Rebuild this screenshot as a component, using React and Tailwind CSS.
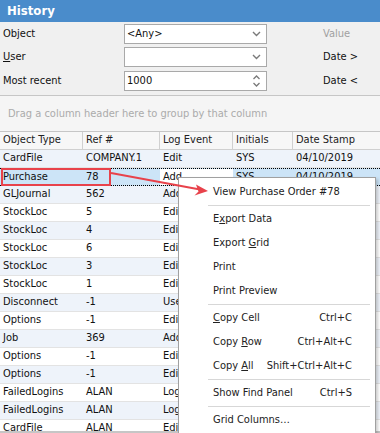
import React from "react";

const F = { fontFamily: "'DejaVu Sans Condensed', 'DejaVu Sans', sans-serif" };

const rows = [
  ["CardFile", "COMPANY.1", "Edit", "SYS", "04/10/2019"],
  ["Purchase", "78", "Add", "SYS", "04/10/2019"],
  ["GLJournal", "562", "Add", "SYS", "04/10/2019"],
  ["StockLoc", "5", "Edit", "SYS", "04/10/2019"],
  ["StockLoc", "4", "Edit", "SYS", "04/10/2019"],
  ["StockLoc", "6", "Edit", "SYS", "04/10/2019"],
  ["StockLoc", "3", "Edit", "SYS", "04/10/2019"],
  ["StockLoc", "1", "Edit", "SYS", "04/10/2019"],
  ["Disconnect", "-1", "User", "SYS", "04/10/2019"],
  ["Options", "-1", "Edit", "SYS", "04/10/2019"],
  ["Job", "369", "Add", "SYS", "04/10/2019"],
  ["Options", "-1", "Edit", "SYS", "04/10/2019"],
  ["Options", "-1", "Edit", "SYS", "04/10/2019"],
  ["FailedLogins", "ALAN", "Login", "SYS", "04/10/2019"],
  ["FailedLogins", "ALAN", "Login", "SYS", "04/10/2019"],
  ["CardFile", "ALAN", "Edit", "SYS", "04/10/2019"],
];

function Chevron() {
  return (
    <svg width="9" height="6" viewBox="0 0 9 6" className="mr-[5px]">
      <path d="M1 1 L4.5 4.5 L8 1" stroke="#7a7a7a" strokeWidth="1.4" fill="none" />
    </svg>
  );
}

function Spin() {
  return (
    <svg width="9" height="14" viewBox="0 0 9 14" className="mr-[5px]">
      <path d="M1.5 5 L4.5 2 L7.5 5" stroke="#7a7a7a" strokeWidth="1.3" fill="none" />
      <path d="M1.5 9 L4.5 12 L7.5 9" stroke="#7a7a7a" strokeWidth="1.3" fill="none" />
    </svg>
  );
}

function Input({ value, icon }) {
  return (
    <div className="ml-[124px] w-[143px] h-[20px] bg-white border border-[#a9a9a9] flex items-center justify-between pl-[2px]">
      <span className="text-[11px] text-[#111]">{value}</span>
      {icon}
    </div>
  );
}

function MenuItem({ children, shortcut }) {
  return (
    <div className="h-[24px] flex items-center justify-between pl-[34px] pr-[23px] text-[11px] text-[#222]">
      <span>{children}</span>
      {shortcut && <span>{shortcut}</span>}
    </div>
  );
}

function Sep() {
  return (
    <div className="h-[3px] flex items-center pl-[29px] pr-[5px]">
      <div className="h-px w-full bg-[#d7d7d7]" />
    </div>
  );
}

export default function App() {
  const cols = ["w-[83px]", "w-[77px]", "w-[73px]", "w-[60px]", "flex-1"];
  return (
    <div style={F} className="relative w-[380px] h-[433px] overflow-hidden bg-[#f0f0f0] text-[#111]">
      <div className="h-[22px] bg-[#4a8ccb] flex items-center pl-[7px]">
        <span className="text-white font-bold text-[13px]">History</span>
      </div>
      <div className="h-[74px] relative pt-[2px] border-b border-[#c6c6c6]">
        <div className="flex items-center h-[20px] relative">
          <span className="absolute left-[3px] text-[11px]">Object</span>
          <Input value="<Any>" icon={<Chevron />} />
          <span className="ml-[56px] text-[11px] text-[#a0a0a0]">Value</span>
        </div>
        <div className="flex items-center h-[20px] relative mt-[3px]">
          <span className="absolute left-[3px] text-[11px]"><u>U</u>ser</span>
          <Input value="" icon={<Chevron />} />
          <span className="ml-[56px] text-[11px]">Date &gt;</span>
        </div>
        <div className="flex items-center h-[20px] relative mt-[4px]">
          <span className="absolute left-[3px] text-[11px]">Most recent</span>
          <Input value="1000" icon={<Spin />} />
          <span className="ml-[56px] text-[11px]">Date &lt;</span>
        </div>
      </div>
      <div className="h-[35px] bg-[#f5f5f5] flex items-center pl-[8px] pt-[2px]">
        <span className="text-[11px] text-[#ababab]">Drag a column header here to group by that column</span>
      </div>
      <div className="bg-white border-t border-[#c6c6c6]">
        <div className="flex h-[18px] bg-[#f7f7f7] border-b border-[#d0d0d0] text-[11px] text-[#222]">
          {["Object Type", "Ref #", "Log Event", "Initials", "Date Stamp"].map((h, i) => (
            <div key={h} className={`${cols[i]} flex items-center pl-[3px] ${i < 4 ? "border-r border-[#d0d0d0]" : ""}`}>{h}</div>
          ))}
        </div>
        {rows.map((r, ri) => {
          const sel = ri === 1;
          const bg = sel ? "bg-[#cce4f7]" : ri % 2 === 0 ? "bg-[#eef3fa]" : "bg-white";
          return (
            <div key={ri} className={`flex h-[18px] text-[11px] ${bg} ${sel ? "border-y border-dotted border-black" : "border-b border-[#e3e3e3]"}`}>
              {r.map((c, ci) => (
                <div key={ci} className={`${cols[ci]} flex items-center pl-[3px] whitespace-nowrap overflow-hidden ${sel && ci === 2 ? "bg-white" : ""}`}>{c}</div>
              ))}
            </div>
          );
        })}
      </div>
      <div className="absolute left-0 right-0 top-[431px] h-[2px] bg-[#c6c6c6]" />

      {/* red highlight box */}
      <div className="absolute left-[1px] top-[168px] w-[110px] h-[18px] border-2 border-[#e8424b]" />

      {/* context menu */}
      <div className="absolute left-[178px] top-[177px] w-[198px] h-[270px] bg-white border border-[#a0a0a0] shadow-[2px_2px_3px_rgba(0,0,0,0.2)] pt-[2px]">
        <MenuItem>View Purchase Order #78</MenuItem>
        <Sep />
        <MenuItem>E<u>x</u>port Data</MenuItem>
        <MenuItem>Export <u>G</u>rid</MenuItem>
        <MenuItem>Print</MenuItem>
        <MenuItem>Print Preview</MenuItem>
        <Sep />
        <MenuItem shortcut="Ctrl+C"><u>C</u>opy Cell</MenuItem>
        <MenuItem shortcut="Ctrl+Alt+C">Copy <u>R</u>ow</MenuItem>
        <MenuItem shortcut="Shift+Ctrl+Alt+C">Copy <u>A</u>ll</MenuItem>
        <Sep />
        <MenuItem shortcut="Ctrl+S">Show Find Panel</MenuItem>
        <Sep />
        <MenuItem>Grid Columns…</MenuItem>
      </div>

      {/* arrow */}
      <svg className="absolute left-0 top-0 pointer-events-none" width="380" height="433">
        <line x1="111" y1="173" x2="200" y2="189.5" stroke="#e8424b" strokeWidth="2" />
        <path d="M208 191 L196 184.5 L198.5 191.5 L194.5 195.5 Z" fill="#e8424b" />
      </svg>
    </div>
  );
}
